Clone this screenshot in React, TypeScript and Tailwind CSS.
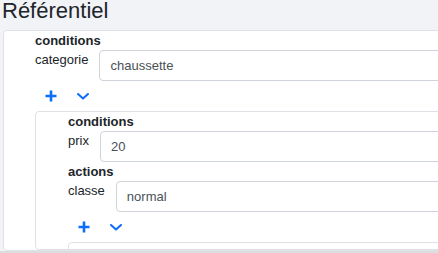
import React from 'react';

const font = { fontFamily: '"Liberation Sans", Arial, sans-serif' };

function PlusIcon() {
  return (
    <svg width="12" height="12" viewBox="0 0 12 12" className="block">
      <path d="M6 0.5v11M0.5 6h11" stroke="#0d6efd" strokeWidth="2.6" fill="none" />
    </svg>
  );
}

function ChevronIcon() {
  return (
    <svg width="12" height="7" viewBox="0 0 12 7" className="block">
      <path d="M1 1l5 4.6L11 1" stroke="#0d6efd" strokeWidth="2" fill="none" strokeLinecap="round" strokeLinejoin="round" />
    </svg>
  );
}

function Field({ label, value }: { label: string; value: string }) {
  return (
    <div className="flex items-start gap-[11px]">
      <label className="pt-[2px] text-[13px] leading-[15px] text-[#212529] whitespace-nowrap">{label}</label>
      <div className="flex-1 h-[31px] flex items-center px-[10px] border border-[#ced4da] rounded-[4px] bg-white text-[13px] leading-[15px] text-[#495057]">
        {value}
      </div>
    </div>
  );
}

function Section({ title }: { title: string }) {
  return <div className="font-bold text-[13px] leading-[19px] text-[#212529]">{title}</div>;
}

function Toolbar() {
  return (
    <div className="flex h-[30px]">
      <button className="w-[32px] h-[30px] flex items-center justify-center">
        <PlusIcon />
      </button>
      <button className="w-[32px] h-[30px] flex items-center justify-center">
        <ChevronIcon />
      </button>
    </div>
  );
}

export default function App() {
  return (
    <div className="w-[438px] h-[253px] overflow-hidden bg-[#f1f3f7] flex flex-col" style={font}>
      <h1 className="pl-[2px] text-[22px] leading-[22px] font-normal text-[#212529] mb-[8px]">Référentiel</h1>
      <div className="ml-[3px] w-[640px] h-[221px] shrink-0 overflow-hidden rounded-[4px] border border-[#dee2e6] bg-white pl-[31px]">
        <Section title="conditions" />
        <Field label="categorie" value="chaussette" />
        <Toolbar />
        <div className="h-[139px] overflow-hidden rounded-[4px] border border-[#dee2e6] bg-white pl-[32px]">
          <Section title="conditions" />
          <Field label="prix" value="20" />
          <Section title="actions" />
          <Field label="classe" value="normal" />
          <Toolbar />
          <div className="h-[40px] rounded-[4px] border border-[#dee2e6] bg-white" />
        </div>
      </div>
      <div className="flex-1 bg-[#dddddd]" />
    </div>
  );
}
